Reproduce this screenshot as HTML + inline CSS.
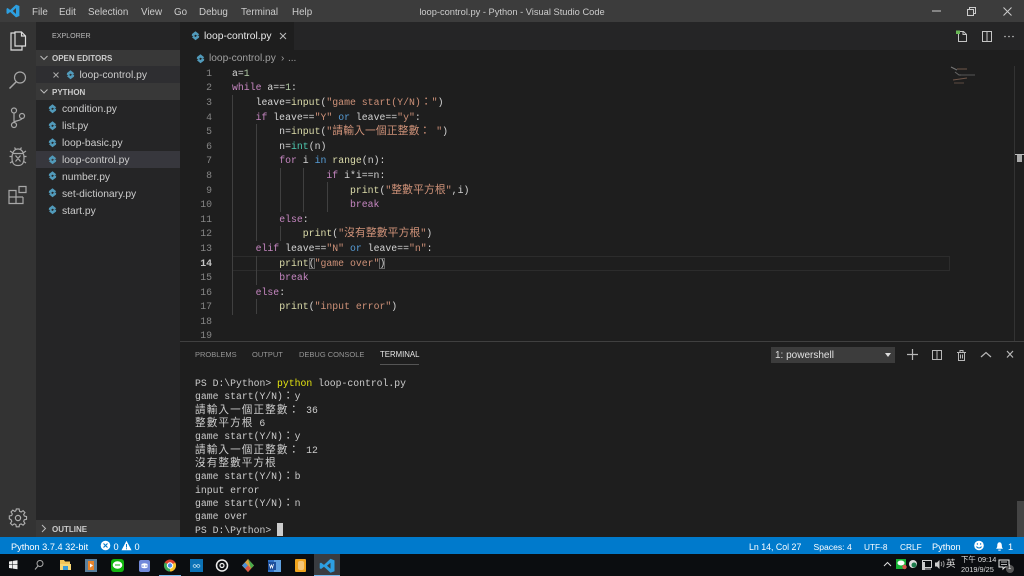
<!DOCTYPE html>
<html><head><meta charset="utf-8"><style>
*{box-sizing:border-box}
html,body{margin:0;padding:0;width:1024px;height:576px;overflow:hidden;background:#1e1e1e}
body{position:relative;font-family:"Liberation Sans","Noto Sans CJK TC",sans-serif;font-size:10px;color:#ccc;filter:blur(.25px)}
.a{position:absolute;white-space:nowrap}
.b{position:absolute}
svg{position:absolute;overflow:visible}
.m{position:absolute;top:5.500px;line-height:13px;font-size:9.8px;color:#ccc}
.f{position:absolute;left:62px;font-size:10.3px;line-height:17px;height:17px;color:#ccc;margin-top:1px}
.h{position:absolute;font-size:8px;font-weight:bold;color:#ccc;line-height:16px;margin-top:.5px}
pre{margin:0;position:absolute;font-family:"Liberation Mono","Noto Sans CJK TC",monospace}
#code{left:232px;top:66.8px;font-size:9.83px;line-height:14.6px;color:#d4d4d4}
#nums{left:190px;width:22px;top:66.8px;font-size:9.83px;line-height:14.6px;color:#858585;text-align:right}
#term{left:195px;top:377px;font-size:9.77px;line-height:13.33px;color:#ccc}
.c{font-size:10.8px;letter-spacing:.1px;line-height:0}
.t{font-size:10.6px;letter-spacing:1.1px;line-height:0}
.k{color:#c586c0}.s{color:#ce9178}.fn{color:#dcdcaa}.ty{color:#4ec9b0}.kw{color:#569cd6}.n{color:#b5cea8}
.g{position:absolute;width:1px;background:#404040}
.p{position:absolute;top:349px;font-size:7.5px;line-height:12px;color:#969696}
.st{position:absolute;top:539.500px;line-height:14px;font-size:9.2px;color:#fff}
</style></head><body>
<svg width="0" height="0" style="position:absolute"><defs>
<g id="py"><path d="M4.500 0.300 8.200 3.200 6.200 5 4.600 3.600 3 5 0.800 4.900 1 3 Z" fill="#519aba"/><path d="M4.500 9.200 1 6.300 2.800 4.600 4.400 6 6.100 4.600 8.200 4.700 8 6.600Z" fill="#519aba"/></g>
</defs></svg>

<!-- title bar -->
<div class="b" style="left:0;top:0;width:1024px;height:22px;background:#3c3c3c"></div>
<svg style="left:6px;top:4px" width="14" height="14" viewBox="0 0 14 14"><path d="M10 .6 13.400 2v10L10 13.400 4.200 8 1.600 10 .5 9.300V4.700L1.600 4l2.600 2zM10 4 6.800 7 10 10z" fill="#2d9fe0"/></svg>
<div class="m" style="left:32px">File</div><div class="m" style="left:59px">Edit</div><div class="m" style="left:88px">Selection</div><div class="m" style="left:141px">View</div><div class="m" style="left:174px">Go</div><div class="m" style="left:199px">Debug</div><div class="m" style="left:241px">Terminal</div><div class="m" style="left:292px">Help</div>
<div class="a" style="left:0;width:1024px;text-align:center;top:5.500px;line-height:13px;font-size:9.3px;color:#ccc">loop-control.py - Python - Visual Studio Code</div>
<svg style="left:925px;top:5px" width="90" height="12" fill="none" stroke="#ccc"><path d="M7 6h9" stroke-width="1"/><path d="M42.500 4.500h6v6h-6zM44.500 4.500v-2h6v6h-2" stroke-width="1"/><path d="M78.500 2.500l8 8M86.500 2.500l-8 8" stroke-width="1"/></svg>

<!-- activity bar -->
<div class="b" style="left:0;top:22px;width:36px;height:515px;background:#333"></div>
<svg style="left:0;top:22px" width="36" height="190" fill="none" stroke="#c5c5c5" stroke-width="1.200">
<path d="M15 11h-4v17h11v-4M15 11v13h10.500V14l-4-4H15zM21.500 10v4h4" stroke="#ddd"/>
<g stroke="#a8a8a8"><circle cx="20" cy="55.500" r="5.500"/><path d="M16 60l-6.500 6.500" stroke-width="1.500"/>
<circle cx="14" cy="88.500" r="2.500"/><circle cx="14" cy="103" r="2.500"/><circle cx="22" cy="94" r="2.500"/><path d="M14 91v9.500M22 96.500c0 2-8 2.500-8 3.500"/>
<path d="M12 136c0-6 2.500-9 6-9s6 3 6 9-2.500 7.500-6 7.500-6-1.500-6-7.500zM13 131.500h10M9.500 134.500h2.500M24 134.500h2.500M10 129l3 2M26 129l-3 2M10 141l3-2M26 141l-3-2M15.500 133.500l5 6M20.500 133.500l-5 6M15.500 127l-1-1.500M20.500 127l1-1.500"/>
<path d="M9 168.500h7v13H9zM9 175h14M16 175v6.500h7V175M19 164.500h7v6h-7z"/></g>
</svg>
<svg style="left:8px;top:508px" width="20" height="20" viewBox="0 0 20 20" fill="none" stroke="#b0b0b0" stroke-width="1.200"><circle cx="10" cy="10" r="2.600"/><path d="M8.500 1.500h3l.5 2.500 1.700.7 2.100-1.400 2 2-1.400 2.100.7 1.700 2.400.5v3l-2.400.5-.7 1.700 1.400 2.100-2 2-2.100-1.400-1.700.7-.5 2.400h-3l-.5-2.400-1.700-.7-2.100 1.400-2-2 1.400-2.100-.7-1.700L1 12V9l2.500-.5.700-1.700L2.800 4.700l2-2 2.100 1.400L8 3.400z" transform="translate(.4 -.4) scale(.93)"/></svg>

<!-- sidebar -->
<div class="b" style="left:36px;top:22px;width:144px;height:515px;background:#252526"></div>
<div class="a" style="left:52px;top:30px;font-size:7.1px;line-height:12px;color:#bbb">EXPLORER</div>
<div class="b" style="left:36px;top:50px;width:144px;height:16px;background:#383838"></div>
<div class="h" style="left:52px;top:50px">OPEN EDITORS</div>
<div class="b" style="left:36px;top:66px;width:144px;height:17px;background:#2e2e31"></div>
<div class="b" style="left:36px;top:83px;width:144px;height:17px;background:#383838"></div>
<div class="h" style="left:52px;top:84px">PYTHON</div>
<div class="b" style="left:36px;top:151px;width:144px;height:17px;background:#37373d"></div>
<div class="b" style="left:36px;top:520px;width:144px;height:17px;background:#383838"></div>
<div class="h" style="left:52px;top:521px">OUTLINE</div>
<svg style="left:36px;top:50px" width="30" height="480" fill="none" stroke="#bbb" stroke-width="1"><path d="M4.500 6l3.500 3.500L11.500 6M4.500 39.500l3.500 3.500 3.500-3.500M6 475l3.500 3.500L6 482"/><path d="M17.500 22.500l5 5M22.500 22.500l-5 5" stroke="#aaa"/></svg>
<svg style="left:66px;top:70px" width="10" height="10"><use href="#py"/></svg><div class="f" style="left:79.500px;top:66px">loop-control.py</div>
<svg style="left:48px;top:104px" width="10" height="10"><use href="#py"/></svg><div class="f" style="top:100px">condition.py</div>
<svg style="left:48px;top:121px" width="10" height="10"><use href="#py"/></svg><div class="f" style="top:117px">list.py</div>
<svg style="left:48px;top:138px" width="10" height="10"><use href="#py"/></svg><div class="f" style="top:134px">loop-basic.py</div>
<svg style="left:48px;top:155px" width="10" height="10"><use href="#py"/></svg><div class="f" style="top:151px">loop-control.py</div>
<svg style="left:48px;top:171px" width="10" height="10"><use href="#py"/></svg><div class="f" style="top:168px">number.py</div>
<svg style="left:48px;top:188px" width="10" height="10"><use href="#py"/></svg><div class="f" style="top:185px">set-dictionary.py</div>
<svg style="left:48px;top:205px" width="10" height="10"><use href="#py"/></svg><div class="f" style="top:202px">start.py</div>

<!-- editor tabs -->
<div class="b" style="left:180px;top:22px;width:844px;height:28px;background:#252526"></div>
<div class="b" style="left:180px;top:22px;width:114px;height:28px;background:#1e1e1e"></div>
<svg style="left:191px;top:31px" width="10" height="10"><use href="#py"/></svg>
<div class="a" style="left:204px;top:29.500px;font-size:10.3px;line-height:14px;color:#e8e8e8">loop-control.py</div>
<svg style="left:279px;top:32px" width="9" height="9" fill="none" stroke="#bbb"><path d="M1 1l6 6M7 1l-6 6"/></svg>
<svg style="left:955px;top:29px" width="62" height="14" fill="none" stroke="#c5c5c5"><path d="M3.500 2.500h5l3 3v7h-8zM8 2.500v3h3.500"/><path d="M1 1.500h4v3.500H1z" fill="#69b756" stroke="none"/><path d="M27.500 2.500h9v10h-9zM32 2.500v10"/><circle cx="50" cy="7.500" r=".8" fill="#c5c5c5" stroke="none"/><circle cx="54" cy="7.500" r=".8" fill="#c5c5c5" stroke="none"/><circle cx="58" cy="7.500" r=".8" fill="#c5c5c5" stroke="none"/></svg>
<svg style="left:196px;top:54px" width="10" height="10"><use href="#py"/></svg>
<div class="a" style="left:209px;top:52px;font-size:10.2px;line-height:13px;color:#a0a0a0">loop-control.py</div>
<div class="a" style="left:281px;top:52px;font-size:10px;line-height:13px;color:#a0a0a0">&#8250;</div>
<div class="a" style="left:288px;top:52px;font-size:10px;line-height:13px;color:#a0a0a0">...</div>

<!-- editor -->
<div class="b" style="left:232px;top:256px;width:718px;height:15px;border:1px solid #2c2c2c"></div>
<div class="g" style="left:232px;top:95px;height:220px"></div>
<div class="g" style="left:256px;top:124px;height:117px"></div>
<div class="g" style="left:256px;top:256px;height:29px"></div>
<div class="g" style="left:256px;top:299px;height:15px"></div>
<div class="g" style="left:280px;top:168px;height:44px"></div>
<div class="g" style="left:280px;top:226px;height:15px"></div>
<div class="g" style="left:303px;top:168px;height:44px"></div>
<div class="g" style="left:327px;top:182px;height:30px"></div>
<pre id="nums">1
2
3
4
5
6
7
8
9
10
11
12
13
<span style="color:#c6c6c6;font-weight:bold">14</span>
15
16
17
18
19</pre>
<pre id="code">a=<span class="n">1</span>
<span class="k">while</span> a==<span class="n">1</span>:
    leave=<span class="fn">input</span>(<span class="s">"game start(Y/N)<span class="c">：</span>"</span>)
    <span class="k">if</span> leave==<span class="s">"Y"</span> <span class="kw">or</span> leave==<span class="s">"y"</span>:
        n=<span class="fn">input</span>(<span class="s">"<span class="c">請輸入一個正整數：</span> "</span>)
        n=<span class="ty">int</span>(n)
        <span class="k">for</span> i <span class="kw">in</span> <span class="fn">range</span>(n):
                <span class="k">if</span> i*i==n:
                    <span class="fn">print</span>(<span class="s">"<span class="c">整數平方根</span>"</span>,i)
                    <span class="k">break</span>
        <span class="k">else</span>:
            <span class="fn">print</span>(<span class="s">"<span class="c">沒有整數平方根</span>"</span>)
    <span class="k">elif</span> leave==<span class="s">"N"</span> <span class="kw">or</span> leave==<span class="s">"n"</span>:
        <span class="fn">print</span><span style="outline:1px solid #666;outline-offset:-1px">(</span><span class="s">"game over"</span><span style="outline:1px solid #666;outline-offset:-1px">)</span>
        <span class="k">break</span>
    <span class="k">else</span>:
        <span class="fn">print</span>(<span class="s">"input error"</span>)</pre>
<!-- minimap -->
<svg style="left:949px;top:65px" width="26" height="20" stroke-width="1" fill="none"><path d="M2 2l6 3" stroke="#777"/><path d="M8 4h10" stroke="#6e5548"/><path d="M6 7l4 3 10 0" stroke="#666"/><path d="M12 10h14" stroke="#555"/><path d="M4 15l14-2" stroke="#6e5548"/><path d="M5 18h10" stroke="#5c4a40"/></svg>
<div class="b" style="left:1014px;top:66px;width:1px;height:275px;background:#333"></div>
<div class="b" style="left:1015px;top:154px;width:9px;height:1px;background:#bbb"></div>
<div class="b" style="left:1017px;top:155px;width:5px;height:7px;background:#aaa"></div>

<!-- panel -->
<div class="b" style="left:180px;top:341px;width:844px;height:196px;background:#1e1e1e;border-top:1px solid #404040"></div>
<div class="p" style="left:195px">PROBLEMS</div><div class="p" style="left:252px">OUTPUT</div><div class="p" style="left:299px">DEBUG CONSOLE</div><div class="p" style="left:380px;color:#e7e7e7;font-size:7.800px">TERMINAL</div>
<div class="b" style="left:380px;top:364px;width:39px;height:1px;background:#555"></div>
<div class="b" style="left:771px;top:347px;width:124px;height:16px;background:#3c3c3c"></div>
<div class="a" style="left:775px;top:349px;font-size:10px;line-height:14px;color:#e0e0e0">1: powershell</div>
<svg style="left:884px;top:352px" width="8" height="6"><path d="M1 1h6L4 5z" fill="#ddd"/></svg>
<svg style="left:905px;top:347px" width="112" height="16" fill="none" stroke="#b8b8b8" stroke-width="1"><path d="M2 7.500h11M7.500 2v11" stroke-width="1.200"/><path d="M27.500 3.500h9v9h-9zM32 3.500v9"/><path d="M52 5.500h9M53.500 5.500v8h6v-8M55 5.500v-2h3v2M55.500 7.500v4M57.500 7.500v4"/><path d="M76 10l5-4.500 5 4.500" stroke-width="1.200"/><path d="M102 4l6 6.500M108 4l-6 6.500" stroke-width="1.200"/></svg>
<pre id="term">PS D:\Python&gt; <span style="color:#e5e510">python</span> loop-control.py
game start(Y/N)<span class="t">：</span>y
<span class="t">請輸入一個正整數：</span> 36
<span class="t">整數平方根</span> 6
game start(Y/N)<span class="t">：</span>y
<span class="t">請輸入一個正整數：</span> 12
<span class="t">沒有整數平方根</span>
game start(Y/N)<span class="t">：</span>b
input error
game start(Y/N)<span class="t">：</span>n
game over
PS D:\Python&gt; </pre>
<div class="b" style="left:277px;top:523px;width:6px;height:13px;background:#ccc"></div>
<div class="b" style="left:1017px;top:501px;width:7px;height:36px;background:#444"></div>

<!-- status bar -->
<div class="b" style="left:0;top:537px;width:1024px;height:17px;background:#007acc"></div>
<div class="st" style="left:11px">Python 3.7.4 32-bit</div>
<svg style="left:100px;top:540px" width="32" height="11"><circle cx="5.500" cy="5.500" r="4.800" fill="#fff"/><path d="M3.500 3.500l4 4M7.500 3.500l-4 4" stroke="#007acc" stroke-width="1.100"/><path d="M26.500 .8l5 9.500h-10z" fill="#fff"/><path d="M26.500 4v3.500M26.500 8.200v1" stroke="#007acc"/></svg>
<div class="st" style="left:113.500px">0</div><div class="st" style="left:134.500px">0</div>
<div class="st" style="left:749px;font-size:8.800px">Ln 14, Col 27</div><div class="st" style="left:813.500px;font-size:8.600px">Spaces: 4</div><div class="st" style="left:864px;font-size:8.300px">UTF-8</div><div class="st" style="left:900px;font-size:8.300px">CRLF</div><div class="st" style="left:932px">Python</div>
<svg style="left:974px;top:540px" width="40" height="11"><circle cx="5" cy="5.500" r="4.800" fill="#fff"/><circle cx="3.400" cy="4" r=".7" fill="#007acc"/><circle cx="6.600" cy="4" r=".7" fill="#007acc"/><path d="M2.500 6.500c1 2 4 2 5 0" stroke="#007acc" fill="none"/><path d="M27 8.500h-5c1-1 1.300-2 1.300-3.500 0-1.500.8-3 2.200-3s2.300 1.500 2.300 3c0 1.500.3 2.500 1.200 3.500zM24.300 9.300h2.500v1h-2.500z" transform="translate(0 .3)" fill="#fff"/></svg>
<div class="st" style="left:1008px">1</div>

<!-- taskbar -->
<div class="b" style="left:0;top:554px;width:1024px;height:22px;background:#0b0d10"></div>
<div class="b" style="left:314px;top:554px;width:26px;height:22px;background:#393c40"></div>
<div class="b" style="left:159px;top:575px;width:22px;height:1px;background:#76b9ed"></div>
<div class="b" style="left:314px;top:575px;width:26px;height:1px;background:#76b9ed"></div>
<svg style="left:0;top:554px" width="340" height="22" fill="none">
<path d="M9 7.500l3.500-.5v3.500H9zM13 6.900l4.500-.7v4.300H13zM9 11h3.500v3.500L9 14zM13 11h4.500v4.300L13 14.600z" fill="#eee"/>
<circle cx="40" cy="9.500" r="3" stroke="#aaa"/><path d="M38 12l-3 3.500" stroke="#aaa"/>
<path d="M60 6h4l1 1.500h5V10H60z" fill="#f2c558"/><path d="M60 10h11v6H60z" fill="#f8d775"/><path d="M63 12h5v4h-5z" fill="#3a9bd5"/>
<rect x="85" y="5" width="12" height="13" fill="#5a7f9c"/><path d="M88 7h6v9h-6z" fill="#e8842c"/><path d="M90 9.500l3 2-3 2z" fill="#fff"/>
<rect x="111" y="5" width="13" height="13" rx="3" fill="#11b50f"/><ellipse cx="117.500" cy="11" rx="4.800" ry="3.800" fill="#fff"/><path d="M115 11h5" stroke="#11b50f"/>
<rect x="139" y="6" width="11" height="12" rx="2" fill="#7289da"/><path d="M141.500 10c2-1 4-1 6 0v3.500c-2 1-4 1-6 0z" fill="#fff"/><circle cx="143" cy="12" r=".8" fill="#7289da"/><circle cx="146" cy="12" r=".8" fill="#7289da"/>
<circle cx="170" cy="11.500" r="6" fill="#e0442f"/><path d="M170 11.500L164.800 8.500A6 6 0 0 0 170 17.500z" fill="#3bab57"/><path d="M170 11.500l5.200-3A6 6 0 0 1 170 17.500z" fill="#f7c52c"/><circle cx="170" cy="11.500" r="2.700" fill="#4a8ef2" stroke="#fff"/>
<rect x="190" y="5" width="13" height="13" fill="#0b72b6"/><path d="M193 12c1-2 2-2 3.500 0s2.500 2 3.500 0c-1-2-2.500-2-3.500 0s-2.500 2-3.500 0z" stroke="#bde" stroke-width=".8"/>
<circle cx="222" cy="11.500" r="5.500" stroke="#eee" stroke-width="1.500"/><circle cx="222" cy="11.500" r="2" stroke="#eee" stroke-width="1.200"/>
<path d="M248 5l6 6.500-6 6.500-6-6.500z" fill="#d8a440"/><path d="M248 5l6 6.500-3 3z" fill="#49a84c"/><path d="M242 11.500l3-3 3 3-3 3z" fill="#4b8fd6"/><path d="M248 18l-3-3.500 3-3 3 3z" fill="#d9574a"/>
<rect x="268" y="6" width="13" height="12" fill="#2f6fc4"/><rect x="274" y="6" width="7" height="12" fill="#5fa0e0"/><rect x="268" y="8" width="8" height="8" fill="#1d4f9c"/><path d="M269.500 10l1 4 1-3 1 3 1-4" stroke="#fff" stroke-width=".7"/>
<rect x="295" y="5" width="11" height="13" rx="1" fill="#f0a31c"/><rect x="298" y="7" width="6" height="9" rx="2" fill="#f5c679"/>
<path d="M330.500 4.800l4 1.600v10.800l-4 1.500-6.500-6-3 2.300-1.300-.8V9.400l1.300-.8 3 2.300zM330.500 8.700l-3.500 3 3.500 3z" fill="#2d9fe0"/>
</svg>
<svg style="left:880px;top:554px" width="144" height="22" fill="none">
<path d="M4 12l3.500-3.500L11 12" stroke="#ddd"/>
<rect x="16" y="5" width="10" height="10" fill="#16b335"/><ellipse cx="21" cy="9" rx="3.500" ry="2.500" fill="#fff"/><circle cx="24.500" cy="13" r="2.200" fill="#d9534f"/>
<circle cx="33" cy="10" r="4" fill="#ddd"/><circle cx="34" cy="11" r="2.500" fill="#1e7d4d"/>
<rect x="42.500" y="6.500" width="9" height="7" stroke="#ccc"/><path d="M45 15h6" stroke="#ccc"/><path d="M42 8h3v8h-3z" fill="#ccc"/>
<path d="M55 8.500h2l2.500-2.500v9l-2.500-2.500h-2z" fill="#ccc"/><path d="M61 8c1 1 1 3 0 4M63 7c1.500 1.500 1.500 4.500 0 6" stroke="#999"/>
<path d="M119 6h10v7h-4l-2 2v-2h-4z" stroke="#eee"/><path d="M121 8h6M121 10.500h6" stroke="#eee" stroke-width=".8"/><circle cx="130" cy="15" r="4" fill="#555"/>
</svg>
<div class="a" style="left:946px;top:558px;font-size:9.500px;line-height:11px;color:#ddd;font-family:'Noto Sans CJK TC',sans-serif">英</div>
<div class="a" style="left:961px;top:555px;font-size:7.400px;line-height:10px;color:#ddd;font-family:'Liberation Sans','Noto Sans CJK TC',sans-serif">下午 09:14</div>
<div class="a" style="left:961px;top:565px;font-size:7.400px;line-height:10px;color:#ddd">2019/9/25</div>
<div class="a" style="left:1008px;top:564px;font-size:6px;line-height:8px;color:#eee">1</div>
</body></html>
